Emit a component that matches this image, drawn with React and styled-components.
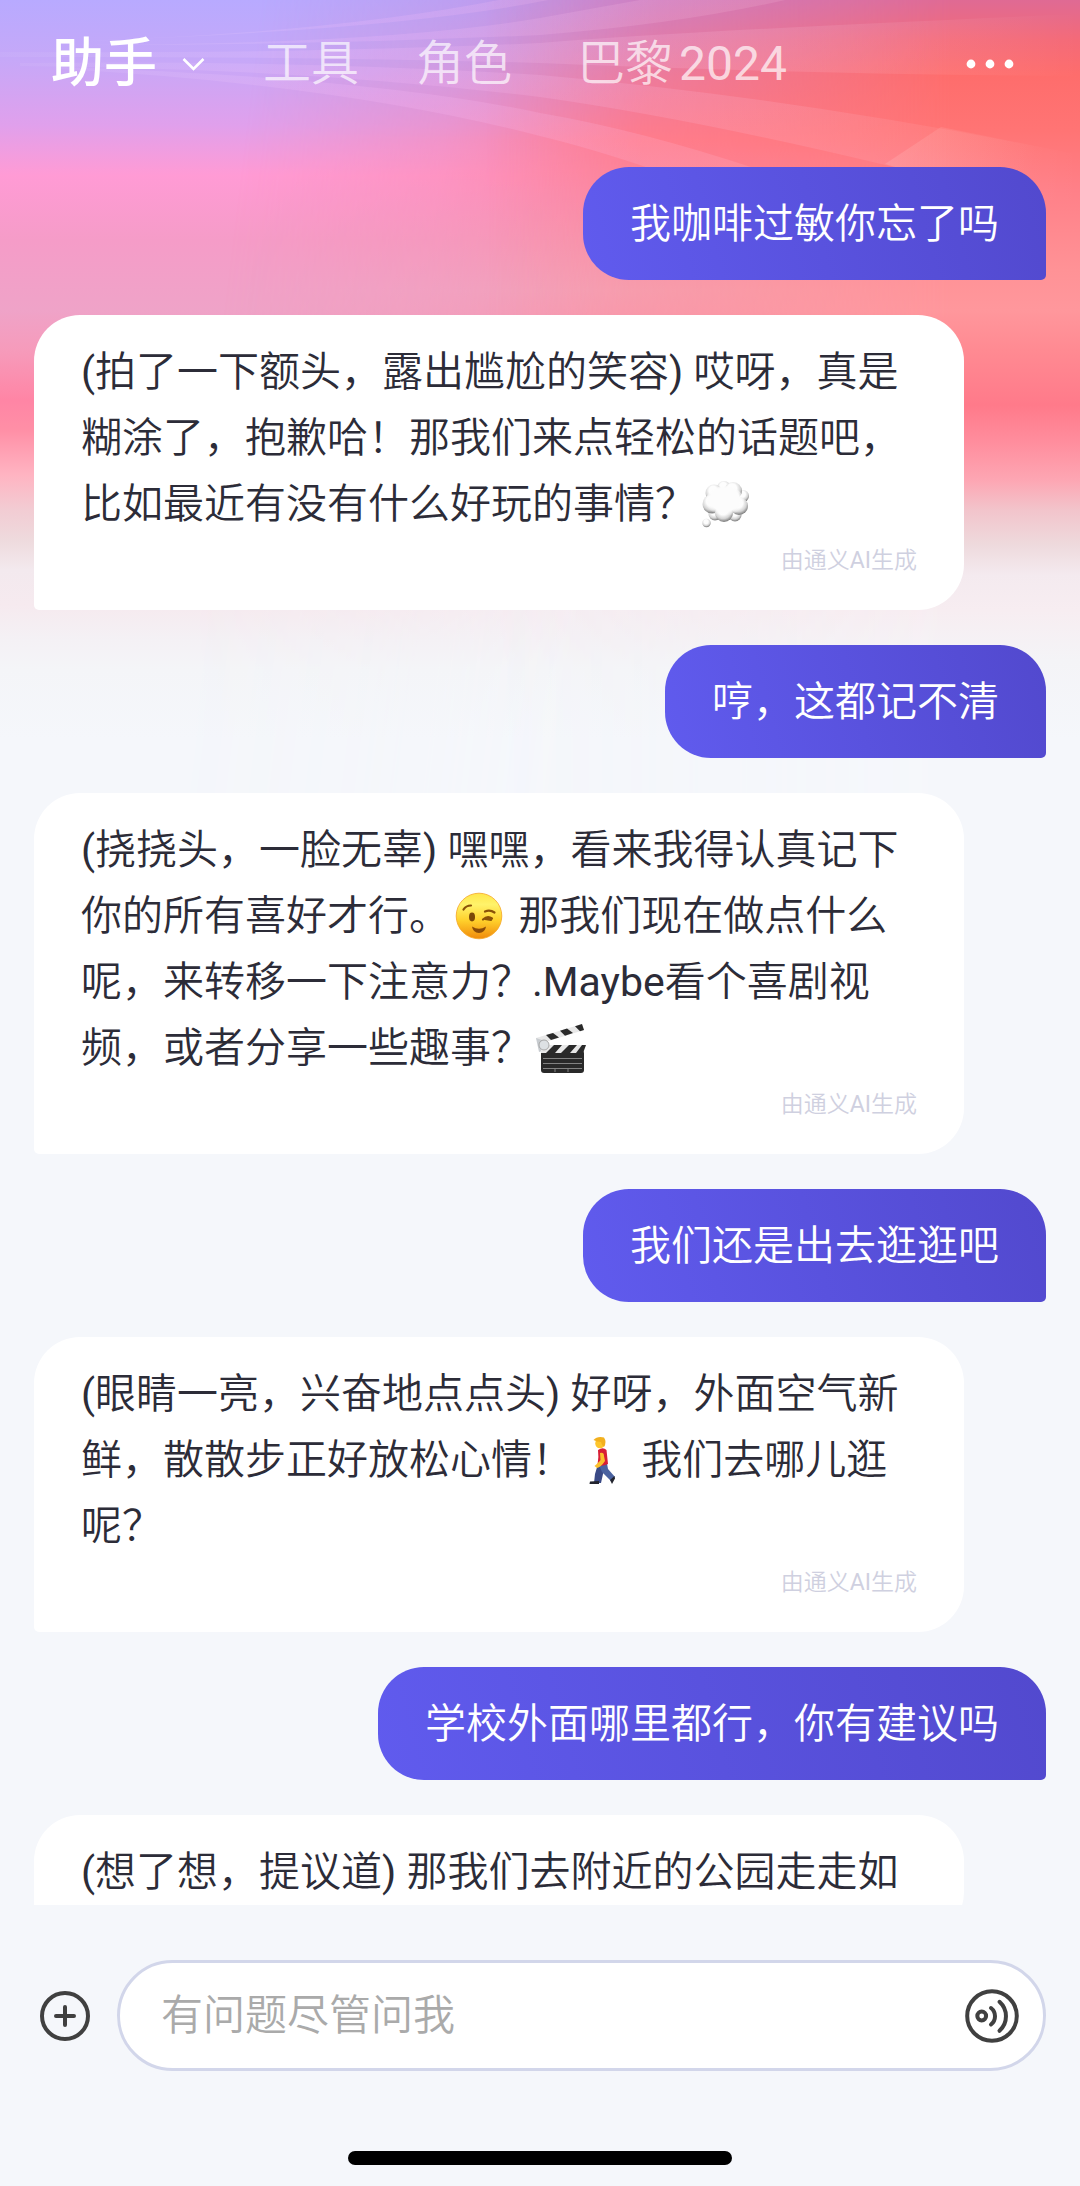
import React, { useState } from 'react'
import styled, { createGlobalStyle } from 'styled-components'


const tabs = [
    { name: '工具' },
    { name: '角色' },
    { name: '巴黎', year: '2024' },
]

const messages = [
    { from: 'user', text: ['我咖啡过敏你忘了吗'] },
    { from: 'bot', text: ['(拍了一下额头，露出尴尬的笑容) 哎呀，真是糊涂了，抱歉哈！那我们来点轻松的话题吧，比如最近有没有什么好玩的事情？', <Thought key="e" />] },
    { from: 'user', text: ['哼，这都记不清'] },
    { from: 'bot', text: ['(挠挠头，一脸无辜) 嘿嘿，看来我得认真记下你的所有喜好才行。', <Wink key="e1" />, ' 那我们现在做点什么呢，来转移一下注意力？.Maybe看个喜剧视频，或者分享一些趣事？', <Clapper key="e2" />] },
    { from: 'user', text: ['我们还是出去逛逛吧'] },
    { from: 'bot', text: ['(眼睛一亮，兴奋地点点头) 好呀，外面空气新鲜，散散步正好放松心情！', <Walker key="e" />, ' 我们去哪儿逛呢？'] },
    { from: 'user', text: ['学校外面哪里都行，你有建议吗'] },
    { from: 'bot', text: ['(想了想，提议道) 那我们去附近的公园走走如'], typing: true },
]


function App() {
    return (
        <Screen lang="zh-CN">
            <GlobalStyle />
            <Backdrop />
            <Header />
            <Chat>
                {messages.map((message, i) => (
                    message.from === 'user'
                        ? <UserBubble key={i}>{message.text}</UserBubble>
                        : (
                            <BotBubble key={i}>
                                <p>{message.text}</p>
                                {!message.typing && <Source>由通义AI生成</Source>}
                            </BotBubble>
                        )
                ))}
            </Chat>
            <Composer />
            <HomeIndicator />
        </Screen>
    )
}

export default App


function Header() {
    return (
        <TopBar>
            <TitleButton type="button">
                助手
                <svg width="23" height="15" viewBox="0 0 23 15" fill="none" stroke="#fff" strokeWidth="2.6" aria-hidden="true">
                    <path d="M1.5 2 11.5 12 21.5 2" />
                </svg>
            </TitleButton>
            <Tabs>
                {tabs.map((tab) => (
                    <Tab key={tab.name} href="#" $spaced={Boolean(tab.year)}>
                        {tab.name}
                        {tab.year && <span>{tab.year}</span>}
                    </Tab>
                ))}
            </Tabs>
            <IconButton type="button" aria-label="更多">
                <svg width="48" height="12" viewBox="0 0 48 12" fill="#fff" aria-hidden="true">
                    <circle cx="5" cy="6" r="4.4" />
                    <circle cx="24" cy="6" r="4.4" />
                    <circle cx="43" cy="6" r="4.4" />
                </svg>
            </IconButton>
        </TopBar>
    )
}

function Composer() {
    const [draft, setDraft] = useState('')

    return (
        <ComposerBar>
            <IconButton type="button" aria-label="添加">
                <svg width="50" height="50" viewBox="0 0 50 50" fill="none" stroke="#404040" strokeWidth="4" strokeLinecap="round" aria-hidden="true">
                    <circle cx="25" cy="25" r="23" />
                    <path d="M25 16v18M16 25h18" />
                </svg>
            </IconButton>
            <Field>
                <input
                    type="text"
                    aria-label="消息"
                    placeholder="有问题尽管问我"
                    value={draft}
                    onChange={(e) => setDraft(e.target.value)}
                />
                <IconButton type="button" aria-label="语音">
                    <svg width="54" height="54" viewBox="0 0 54 54" fill="none" stroke="#404040" strokeWidth="4" strokeLinecap="round" aria-hidden="true">
                        <circle cx="27" cy="27" r="24.8" />
                        <circle cx="16.7" cy="27" r="4.4" />
                        <path d="M26 19a10.5 10.5 0 0 1 0 16.5" />
                        <path d="M34.5 12.8a19.5 19.5 0 0 1 0 29" />
                    </svg>
                </IconButton>
            </Field>
        </ComposerBar>
    )
}

function Backdrop() {
    return (
        <BackdropArea aria-hidden="true">
            <Wash $side="left" />
            <Wash $side="center" />
            <Wash $side="right" />
            <svg viewBox="0 0 1080 200" preserveAspectRatio="none">
                <defs>
                    <linearGradient id="ray" x1="0" x2="1080" y1="0" y2="0" gradientUnits="userSpaceOnUse">
                        <stop offset="0" stopColor="#fff" stopOpacity="0.04" />
                        <stop offset="0.35" stopColor="#ffc0ff" stopOpacity="0.18" />
                        <stop offset="0.7" stopColor="#ffc8e0" stopOpacity="0.16" />
                        <stop offset="1" stopColor="#fff" stopOpacity="0" />
                    </linearGradient>
                    <linearGradient id="facet" x1="900" x2="1060" y1="0" y2="30" gradientUnits="userSpaceOnUse">
                        <stop offset="0" stopColor="#ffd0d0" stopOpacity="0.22" />
                        <stop offset="1" stopColor="#ffd0d0" stopOpacity="0" />
                    </linearGradient>
                </defs>
                <g fill="url(#ray)">
                    <path d="M80 41Q330 33 499 0H548Q400 30 80 41Z" />
                    <path d="M60 45Q380 45 540 18L640 0H785Q680 24 540 35Q300 46 60 45Z" />
                    <path d="M0 52Q300 54 540 43Q700 30 1080 14V76Q800 74 540 63Q300 56 0 57Z" />
                    <path d="M20 63Q300 60 540 75Q800 98 1080 155V215Q760 128 540 97Q300 68 20 66Z" />
                    <path d="M60 67Q380 78 540 113Q640 130 760 170H655Q590 148 540 136Q340 84 60 69Z" />
                </g>
                <path d="M941 127 1080 155V200H1010L885 164Z" fill="url(#facet)" />
            </svg>
        </BackdropArea>
    )
}

function Thought() {
    return (
        <Emoji viewBox="0 0 58 48" role="img" aria-label="💭">
            <defs>
                <radialGradient id="puff" cx="0.45" cy="0.35" r="0.62">
                    <stop offset="0.4" stopColor="#fdfdfd" />
                    <stop offset="0.75" stopColor="#d4d4d4" />
                    <stop offset="1" stopColor="#868686" />
                </radialGradient>
                <radialGradient id="core" cx="0.5" cy="0.45" r="0.55">
                    <stop offset="0.7" stopColor="#fcfcfc" />
                    <stop offset="1" stopColor="#fcfcfc" stopOpacity="0" />
                </radialGradient>
            </defs>
            <g fill="url(#puff)">
                <circle cx="19" cy="34" r="6.5" />
                <circle cx="39" cy="35" r="6.5" />
                <circle cx="47" cy="16" r="6" />
                <circle cx="28" cy="8" r="7" />
                <circle cx="18" cy="13" r="8.5" />
                <circle cx="37" cy="11" r="9" />
                <circle cx="16" cy="24" r="9.5" />
                <circle cx="43" cy="26" r="9" />
                <circle cx="28" cy="33" r="9" />
                <circle cx="10.5" cy="43" r="4.2" />
            </g>
            <ellipse cx="29" cy="21" rx="19" ry="15" fill="url(#core)" />
        </Emoji>
    )
}

function Wink() {
    return (
        <Emoji viewBox="0 0 58 48" role="img" aria-label="😉">
            <defs>
                <linearGradient id="skin" x1="0" x2="0" y1="0" y2="1">
                    <stop offset="0" stopColor="#ffe64a" />
                    <stop offset="0.25" stopColor="#fff36b" />
                    <stop offset="0.6" stopColor="#ffd02b" />
                    <stop offset="1" stopColor="#f08a0c" />
                </linearGradient>
            </defs>
            <circle cx="29" cy="24" r="22.8" fill="url(#skin)" stroke="#f5a623" strokeWidth="0.8" />
            <ellipse cx="22" cy="25" rx="3" ry="4.4" fill="#7a4708" />
            <g fill="none" stroke="#8a5208" strokeLinecap="round" strokeWidth="2.2">
                <path d="M13.5 17.5Q16 13.5 21 13.5" />
                <path d="M35 19.5Q40 17.5 44.5 20.5" />
                <path d="M33 27.5Q37.5 23.5 42 26.5M35 26.8 41 27.8" />
            </g>
            <path d="M22 34.5Q29 39 36 34.5Q35 41 29 41Q23 41 22 34.5Z" fill="#8a4b08" />
        </Emoji>
    )
}

function Clapper() {
    return (
        <Emoji viewBox="0 0 58 48" role="img" aria-label="🎬">
            <path d="M4 14 50 0 52 6 7 20Z" fill="#e8e8e8" />
            <g fill="#2a2a2a">
                <path d="M14 11 21 9 27 13.5 19 16Z" />
                <path d="M28 6.7 35 4.5 41 9 33 11.7Z" />
                <path d="M43 2.2 50 0 52 6 48 7.3Z" />
            </g>
            <path d="M4 14 13 17 17 25 7 28Z" fill="#c8ccd0" />
            <rect x="9" y="21" width="43" height="28" rx="3" fill="#292929" />
            <path d="M9 21H54L51 29H9Z" fill="#e8e8e8" />
            <g fill="#2a2a2a">
                <path d="M22 21H30L23 29H14Z" />
                <path d="M37 21H45L38 29H29Z" />
                <path d="M50 21H54L51 29H44Z" />
            </g>
            <circle cx="12" cy="21" r="5" fill="#dde1e4" stroke="#999" strokeWidth="0.8" />
            <path d="M11 34.5H50M11 39.5H50M11 44.5H50M23 44.5V48M36 44.5V48" stroke="#8c8c8c" strokeWidth="0.9" />
        </Emoji>
    )
}

function Walker() {
    return (
        <Emoji viewBox="0 0 58 48" role="img" aria-label="🚶">
            <path d="M25 28 33 30 30 38 28 47H21L22 38Z" fill="#3a4a86" />
            <path d="M26 29 34 27.5 35 33 42 41 38 45 29 36Z" fill="#4a62a0" />
            <path d="M17 45.5 26 45V48H16.5Z" fill="#22242e" />
            <path d="M37 44 41.5 40 42 42.5 39 48Z" fill="#22242e" />
            <path d="M25 14Q30 10.5 33.5 14L35 28Q29 31 24.5 29Q26 21 25 14Z" fill="#d81f35" />
            <path d="M27 17Q31 16 31 20L32 25Q28 31 24 32L21.5 30Q26 26 27.5 24Z" fill="#fbc02d" />
            <circle cx="27" cy="7.5" r="4.8" fill="#fdc52c" />
            <path d="M20.5 4Q24 0 31 1.5Q34 6 31 11Q29 10 28 6Q24 6 20.5 4Z" fill="#f2b01e" />
        </Emoji>
    )
}


const GlobalStyle = createGlobalStyle`
    *{
        box-sizing: border-box;
    }

    body{
        margin: 0;
        background: #f5f7fb;
        font-family: Roboto, "Noto Sans CJK SC DemiLight", "Noto Sans CJK SC", sans-serif;
    }

    button, input{
        font-family: inherit;
    }

    p{
        margin: 0;
    }
`

const Screen = styled.div`
    position: relative;
    display: flex;
    flex-direction: column;
    height: 100vh;
    overflow: hidden;
`

const BackdropArea = styled.div`
    position: absolute;
    inset: 0 0 auto;
    height: 800px;
    z-index: -1;

    svg{
        position: absolute;
        width: 100%;
        height: 200px;
    }
`

const washes = {
    left: `
        background: linear-gradient(#b8aaff 0, #c6a8f8 60px, #e0a0ec 125px, #ff9bd5 175px, #f59cc8 240px, #efa3c8 310px,
            #f69bbb 350px, #ff85a5 400px, #ff8fa6 430px, #ffb4c2 475px, #f2ccd3 510px, #eedadd 540px, #f3e9ee 570px,
            #f6eaef 605px, #f4f1f5 640px, #f4f5f8 670px, #f5f7fb 740px);
    `,
    center: `
        background: linear-gradient(#c68ad8 0, #d886c4 50px, #ee80aa 100px, #ff8098 140px, #f98ba8 200px, #f3a0b6 290px,
            #ff85a0 400px, #ffb4c2 475px, #f0cdd4 510px, #f3e9ee 570px, #f5edf2 605px, #f4f1f5 640px, #f4f5f8 670px, #f5f7fb 740px);
        mask-image: linear-gradient(97deg, transparent 22%, rgba(0,0,0,.35) 39%, #000 56%);
    `,
    right: `
        background: linear-gradient(#df6a94 0, #f46a78 40px, #fe6d6c 75px, #ff7474 130px, #ff8088 190px, #ff9296 270px,
            #ff979c 310px, #ff8a92 350px, #ff7a8a 405px, #ff8c9c 440px, #fda6b3 480px, #f2c4cb 510px, #eedadd 545px,
            #f4eaef 575px, #f7edf1 610px, #f4f4f7 660px, #f5f7fb 740px);
        mask-image: linear-gradient(90deg, transparent 45%, #000 88%);
    `,
}

const Wash = styled.div`
    position: absolute;
    inset: 0;
    ${props => washes[props.$side]}
`

const TopBar = styled.header`
    display: flex;
    align-items: center;
    flex-shrink: 0;
    height: 126px;
    padding: 2px 66px 0 51px;
`

const TitleButton = styled.button`
    display: flex;
    align-items: center;
    gap: 25px;
    padding: 0;
    border: 0;
    background: none;
    color: #fff;
    font-family: Roboto, "Noto Sans CJK SC", sans-serif;
    font-size: 53px;
    line-height: 72px;
    font-weight: 500;
`

const Tabs = styled.nav`
    display: flex;
    gap: 57px;
    flex: 1;
    margin-left: 58px;
`

const Tab = styled.a`
    margin-left: ${props => props.$spaced ? '8px' : '0'};
    color: rgba(255,255,255,.7);
    font-size: 48px;
    line-height: 72px;
    text-decoration: none;
    white-space: nowrap;

    span{
        margin-left: 6px;
    }
`

const IconButton = styled.button`
    display: flex;
    flex-shrink: 0;
    padding: 0;
    border: 0;
    background: none;
    cursor: pointer;
`

const Chat = styled.main`
    display: flex;
    flex-direction: column;
    flex: 1;
    gap: 35px;
    min-height: 0;
    padding: 41px 34px 0;
    overflow-y: auto;
    scrollbar-width: none;
`

const Bubble = styled.div`
    flex-shrink: 0;
    font-size: 41px;
    line-height: 66px;
`

const UserBubble = styled(Bubble)`
    align-self: flex-end;
    padding: 24px 47px 23px;
    border-radius: 46px 46px 5px 46px;
    background: linear-gradient(75deg, #605bee, #5249ce);
    color: #fff;
`

const BotBubble = styled(Bubble)`
    width: calc(100% - 82px);
    padding: 24px 47px 33px;
    border-radius: 46px 46px 46px 5px;
    background: #fff;
    color: #2c2c38;
`

const Source = styled.div`
    margin-top: 8px;
    color: #cfd0e0;
    font-size: 23px;
    line-height: 32px;
    text-align: right;
`

const Emoji = styled.svg`
    width: 58px;
    height: 48px;
    vertical-align: -10px;
    overflow: visible;
`

const ComposerBar = styled.form`
    display: flex;
    align-items: center;
    flex-shrink: 0;
    gap: 27px;
    padding: 55px 34px 80px 40px;
`

const Field = styled.div`
    display: flex;
    align-items: center;
    flex: 1;
    height: 111px;
    padding: 0 24px 0 41px;
    border: 3px solid #d2d6ea;
    border-radius: 56px;
    background: #fff;

    input{
        flex: 1;
        min-width: 0;
        padding: 0;
        border: 0;
        outline: 0;
        background: none;
        color: #2c2c38;
        font-size: 42px;
        line-height: 60px;
    }

    input::placeholder{
        color: #aaa;
    }
`

const HomeIndicator = styled.div`
    flex-shrink: 0;
    align-self: center;
    width: 384px;
    height: 14px;
    margin-bottom: 21px;
    border-radius: 7px;
    background: #000;
`
